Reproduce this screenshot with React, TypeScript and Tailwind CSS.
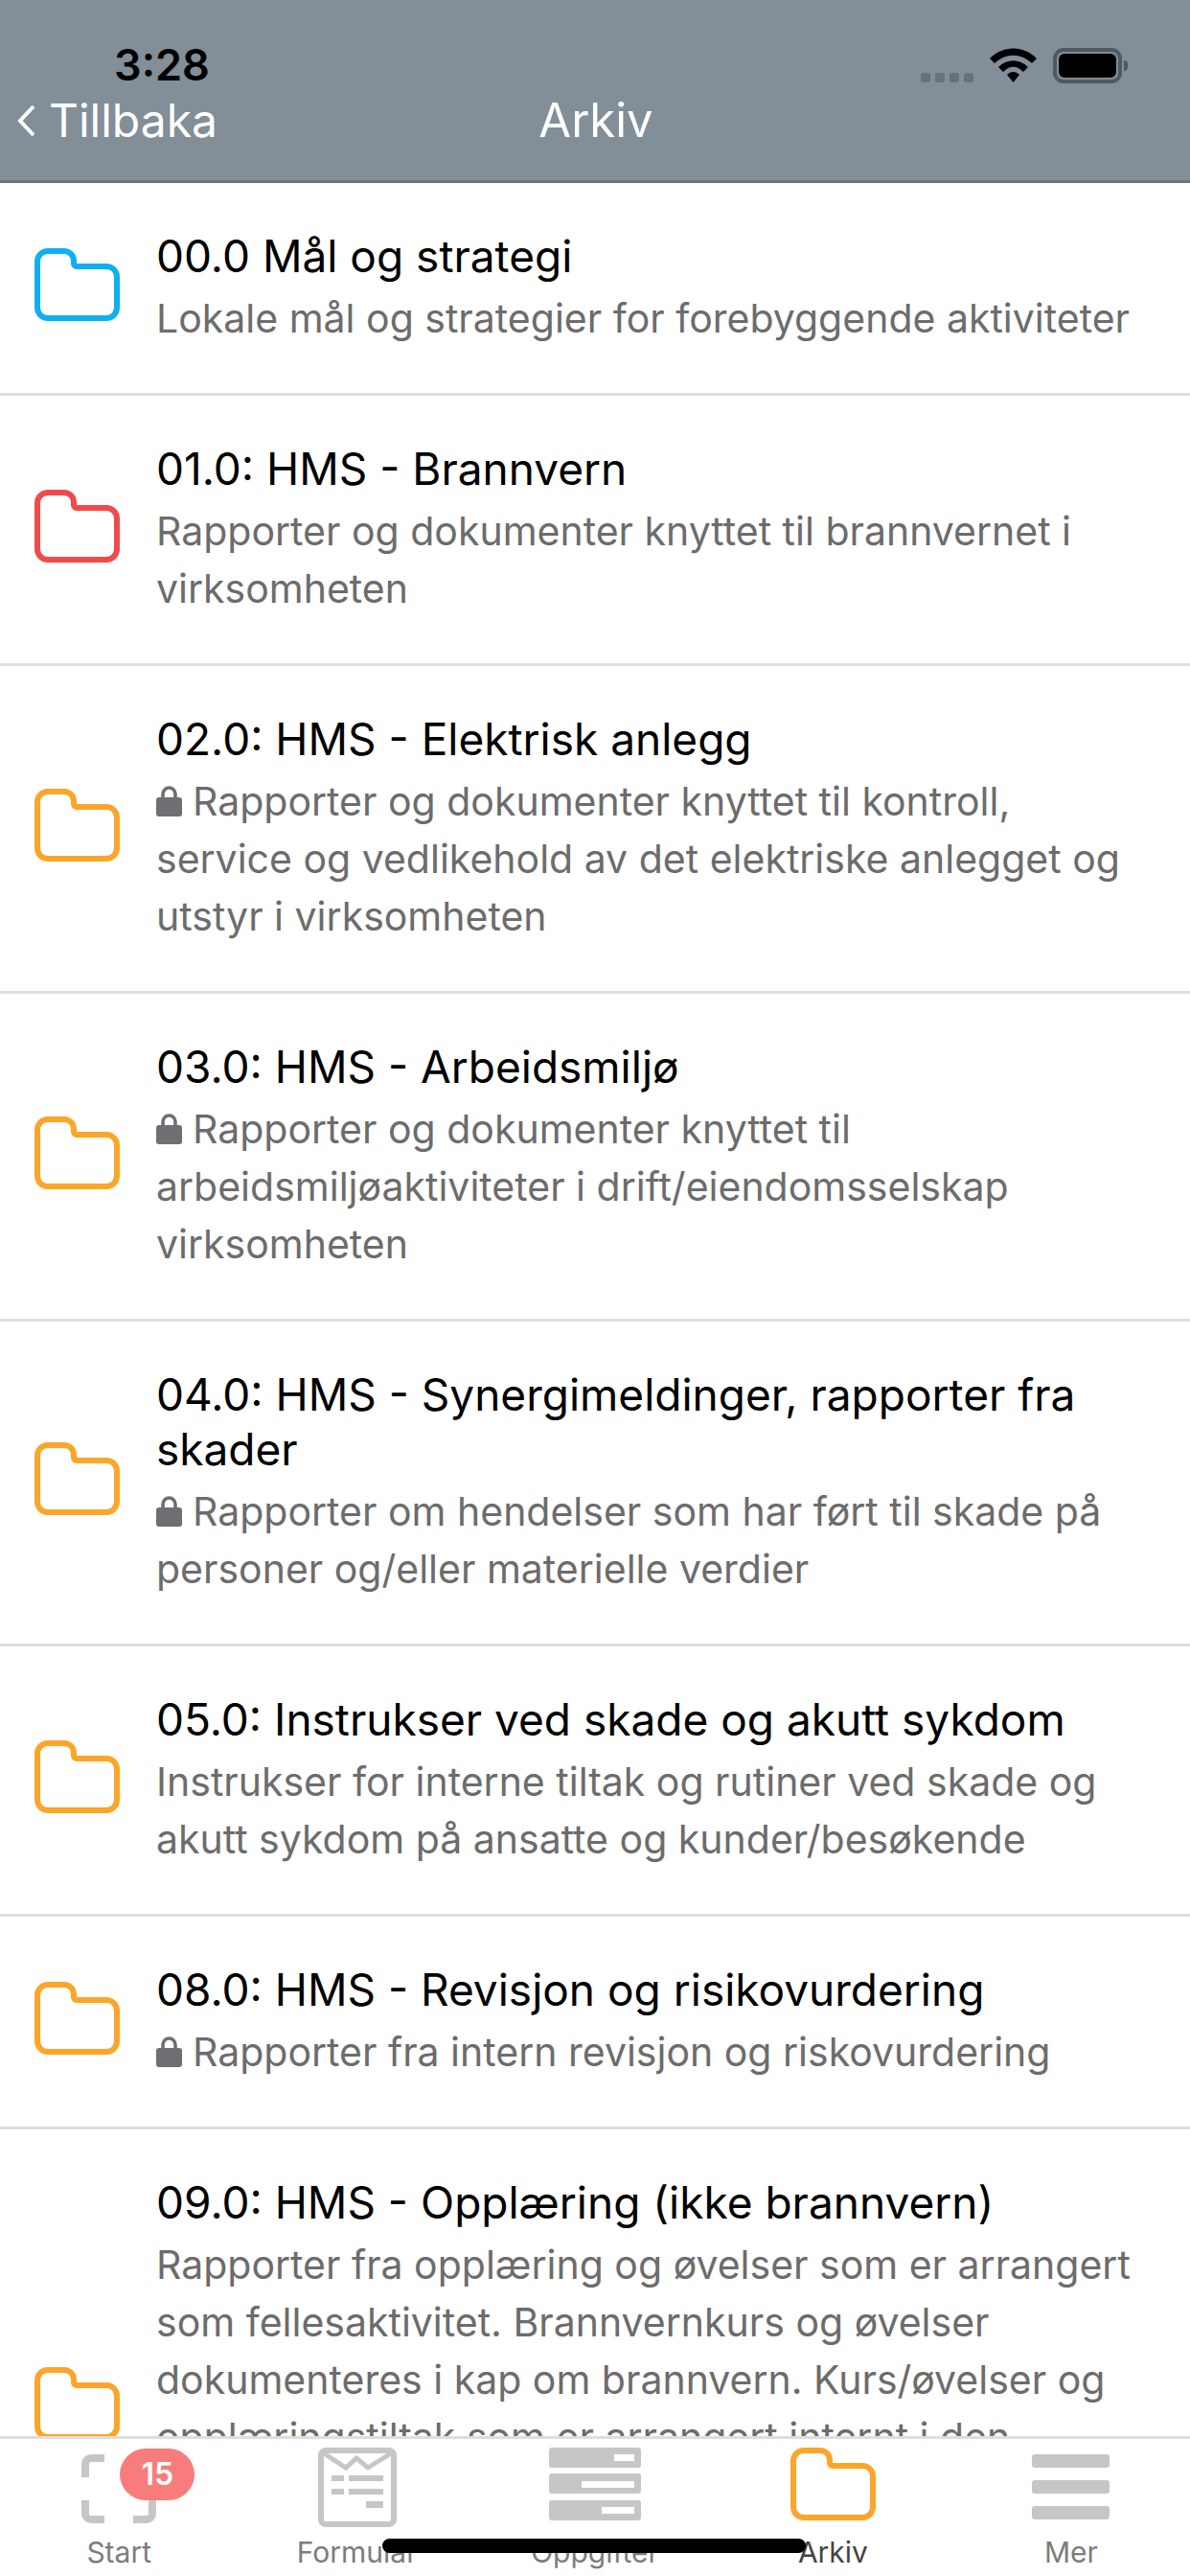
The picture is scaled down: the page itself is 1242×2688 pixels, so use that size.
import React from 'react'

type Row = { title: React.ReactNode; desc: string; locked?: boolean; color: string }

const rows: Row[] = [
  { title: '00.0 Mål og strategi', desc: 'Lokale mål og strategier for forebyggende aktiviteter', color: '#0fb0f0' },
  { title: '01.0: HMS - Brannvern', desc: 'Rapporter og dokumenter knyttet til brannvernet i virksomheten', color: '#f04b4b' },
  { title: '02.0: HMS - Elektrisk anlegg', desc: 'Rapporter og dokumenter knyttet til kontroll, service og vedlikehold av det elektriske anlegget og utstyr i virksomheten', locked: true, color: '#fca528' },
  { title: '03.0: HMS - Arbeidsmiljø', desc: 'Rapporter og dokumenter knyttet til arbeidsmiljøaktiviteter i drift/eiendomsselskap virksomheten', locked: true, color: '#fca528' },
  { title: '04.0: HMS - Synergimeldinger, rapporter fra skader', desc: 'Rapporter om hendelser som har ført til skade på personer og/eller materielle verdier', locked: true, color: '#fca528' },
  { title: '05.0: Instrukser ved skade og akutt sykdom', desc: 'Instrukser for interne tiltak og rutiner ved skade og akutt sykdom på ansatte og kunder/besøkende', color: '#fca528' },
  { title: '08.0: HMS - Revisjon og risikovurdering', desc: 'Rapporter fra intern revisjon og riskovurdering', locked: true, color: '#fca528' },
  { title: '09.0: HMS - Opplæring (ikke brannvern)', desc: 'Rapporter fra opplæring og øvelser som er arrangert som fellesaktivitet. Brannvernkurs og øvelser dokumenteres i kap om brannvern. Kurs/øvelser og opplæringstiltak som er arrangert internt i den enkelte virksomhet og som ikke gjelder brannvern skal dokumenteres her, sammen med oversikt over deltakere og gjennomførte kurs.', color: '#fca528' },
]

function Folder({ color }: { color: string }) {
  return (
    <svg width="89" height="76" viewBox="0 0 89 76" fill="none" className="shrink-0">
      <path
        d="M14 3H31a10 10 0 0 1 10 10v3a3 3 0 0 0 3 3H75a11 11 0 0 1 11 11V62a11 11 0 0 1-11 11H14A11 11 0 0 1 3 62V14A11 11 0 0 1 14 3Z"
        stroke={color}
        strokeWidth="6"
        strokeLinejoin="round"
      />
    </svg>
  )
}

function Lock() {
  return (
    <svg width="27" height="33" viewBox="0 0 27 33" className="inline-block mr-[11px] align-[-1px]">
      <path d="M7 14V9.5a6.5 6.5 0 0 1 13 0V14" fill="none" stroke="#6f6e73" strokeWidth="3.6" />
      <rect x="0" y="13" width="27" height="20" rx="3" fill="#6f6e73" />
    </svg>
  )
}

function StartIcon() {
  return (
    <svg width="78" height="72" viewBox="0 0 78 72" fill="none" stroke="#c6c6c6" strokeWidth="8">
      <path d="M24 4H10a6 6 0 0 0-6 6V24" />
      <path d="M54 4H68a6 6 0 0 1 6 6V24" />
      <path d="M4 48V62a6 6 0 0 0 6 6H24" />
      <path d="M74 48V62a6 6 0 0 1-6 6H54" />
    </svg>
  )
}

function FormIcon() {
  return (
    <svg width="82" height="83" viewBox="0 0 82 83" fill="none">
      <rect x="3" y="3" width="76" height="77" rx="5" stroke="#c6c6c6" strokeWidth="6" />
      <path d="M6 6L29 21L40 11L52 21L76 6" stroke="#c6c6c6" strokeWidth="5" />
      <path d="M14 29H27V35H14ZM32 29H68V35H32ZM14 43H27V49H14ZM32 43H68V49H32ZM50 56H68V63H50Z" fill="#c6c6c6" />
    </svg>
  )
}

function TaskIcon() {
  return (
    <svg width="96" height="76" viewBox="0 0 96 76">
      <rect x="0" y="0" width="96" height="21" rx="3" fill="#c6c6c6" />
      <rect x="0" y="27" width="96" height="21" rx="3" fill="#c6c6c6" />
      <rect x="0" y="55" width="96" height="21" rx="3" fill="#c6c6c6" />
      <rect x="68" y="7" width="21" height="7" fill="#fff" />
      <rect x="34" y="35" width="55" height="7" fill="#fff" />
      <rect x="55" y="62" width="34" height="7" fill="#fff" />
    </svg>
  )
}

function MoreIcon() {
  return (
    <div className="flex flex-col gap-[13px] w-[81px] py-[7px]">
      <div className="h-[14px] rounded-[3px] bg-[#c6c6c6]" />
      <div className="h-[14px] rounded-[3px] bg-[#c6c6c6]" />
      <div className="h-[14px] rounded-[3px] bg-[#c6c6c6]" />
    </div>
  )
}

function Tab({ label, active, children }: { label: string; active?: boolean; children: React.ReactNode }) {
  return (
    <div className="flex-1 flex flex-col items-center">
      <div className="h-[84px] flex items-start justify-center">{children}</div>
      <span className={`mt-[7px] text-[30px] leading-[36px] ${active ? 'text-[#444444]' : 'text-[#7c7c7c]'}`}>{label}</span>
    </div>
  )
}

export default function App() {
  return (
    <div className="relative w-[1242px] h-[2688px] flex flex-col overflow-hidden bg-white font-['Inter',sans-serif]">
      {/* Header */}
      <div className="h-[191px] shrink-0 bg-[#828e98] border-b-[3px] border-[#6a747d] pt-[46px]">
        <div className="flex items-center h-[44px] pl-[119px] pr-[71px]">
          <span className="text-[45px] leading-[44px] font-semibold text-black">3:28</span>
          <div className="ml-auto flex items-center">
            <div className="flex gap-[5px] mt-[26px] mr-[17px]">
              <div className="w-[10px] h-[10px] rounded-[3px] bg-[#66717a]" />
              <div className="w-[10px] h-[10px] rounded-[3px] bg-[#66717a]" />
              <div className="w-[10px] h-[10px] rounded-[3px] bg-[#66717a]" />
              <div className="w-[10px] h-[10px] rounded-[3px] bg-[#66717a]" />
            </div>
            <svg width="49" height="36" viewBox="0 0 49 36" className="mr-[17px]">
              <path d="M0 11C14-3 35-3 49 11L44 16C32 5 17 5 5 16Z" fill="#000" />
              <path d="M9 20C18 11 31 11 40 20L35 25C28 18 21 18 14 25Z" fill="#000" />
              <path d="M18 28C22 24 27 24 31 28L24.5 36Z" fill="#000" />
            </svg>
            <div className="relative w-[72px] h-[37px] rounded-[11px] border-[4px] border-[#4f5962] p-[2px]">
              <div className="w-full h-full rounded-[6px] bg-black" />
              <div className="absolute left-[70px] top-[9px] w-[4px] h-[11px] rounded-r-[4px] bg-[#4f5962]" />
            </div>
          </div>
        </div>
        <div className="grid grid-cols-3 items-center h-[60px] mt-[6px] pl-[18px]">
          <div className="flex items-center text-white text-[48px] leading-[60px]">
            <svg width="20" height="34" viewBox="0 0 20 34" fill="none" className="mr-[13px]">
              <path d="M17 2L3 17L17 32" stroke="#fff" strokeWidth="4" />
            </svg>
            Tillbaka
          </div>
          <div className="text-center text-white text-[49px] leading-[60px] -ml-[16px]">Arkiv</div>
        </div>
      </div>

      {/* Folder list */}
      <div className="flex-1 min-h-0 overflow-hidden">
        {rows.map((row, i) => (
          <div key={i} className="flex items-center pl-[36px] pr-[48px] pt-[48px] pb-[48px] border-b-[3px] border-[#dedede]">
            <div className="mr-[38px] mb-[8px] shrink-0">
              <Folder color={row.color} />
            </div>
            <div className="min-w-0">
              <div className="text-[46px] leading-[57px] text-black">{row.title}</div>
              <div className="mt-[6px] text-[41px] leading-[60px] text-[#6c6c6c]">
                {row.locked && <Lock />}
                {row.desc}
              </div>
            </div>
          </div>
        ))}
      </div>

      {/* Tab bar */}
      <div className="h-[146px] shrink-0 flex pt-[9px] bg-white border-t-[3px] border-[#dedede]">
        <Tab label="Start">
          <div className="relative mt-[7px]">
            <StartIcon />
            <div className="absolute -top-[6px] left-[40px] w-[78px] h-[54px] rounded-[27px] bg-[#f97c7c] flex items-center justify-center text-white text-[32px] font-semibold">
              15
            </div>
          </div>
        </Tab>
        <Tab label="Formular">
          <FormIcon />
        </Tab>
        <Tab label="Oppgifter">
          <TaskIcon />
        </Tab>
        <Tab label="Arkiv" active>
          <Folder color="#fca528" />
        </Tab>
        <Tab label="Mer">
          <MoreIcon />
        </Tab>
      </div>

      {/* Home indicator */}
      <div className="absolute left-[399px] top-[2649px] w-[442px] h-[15px] rounded-full bg-black" />
    </div>
  )
}
